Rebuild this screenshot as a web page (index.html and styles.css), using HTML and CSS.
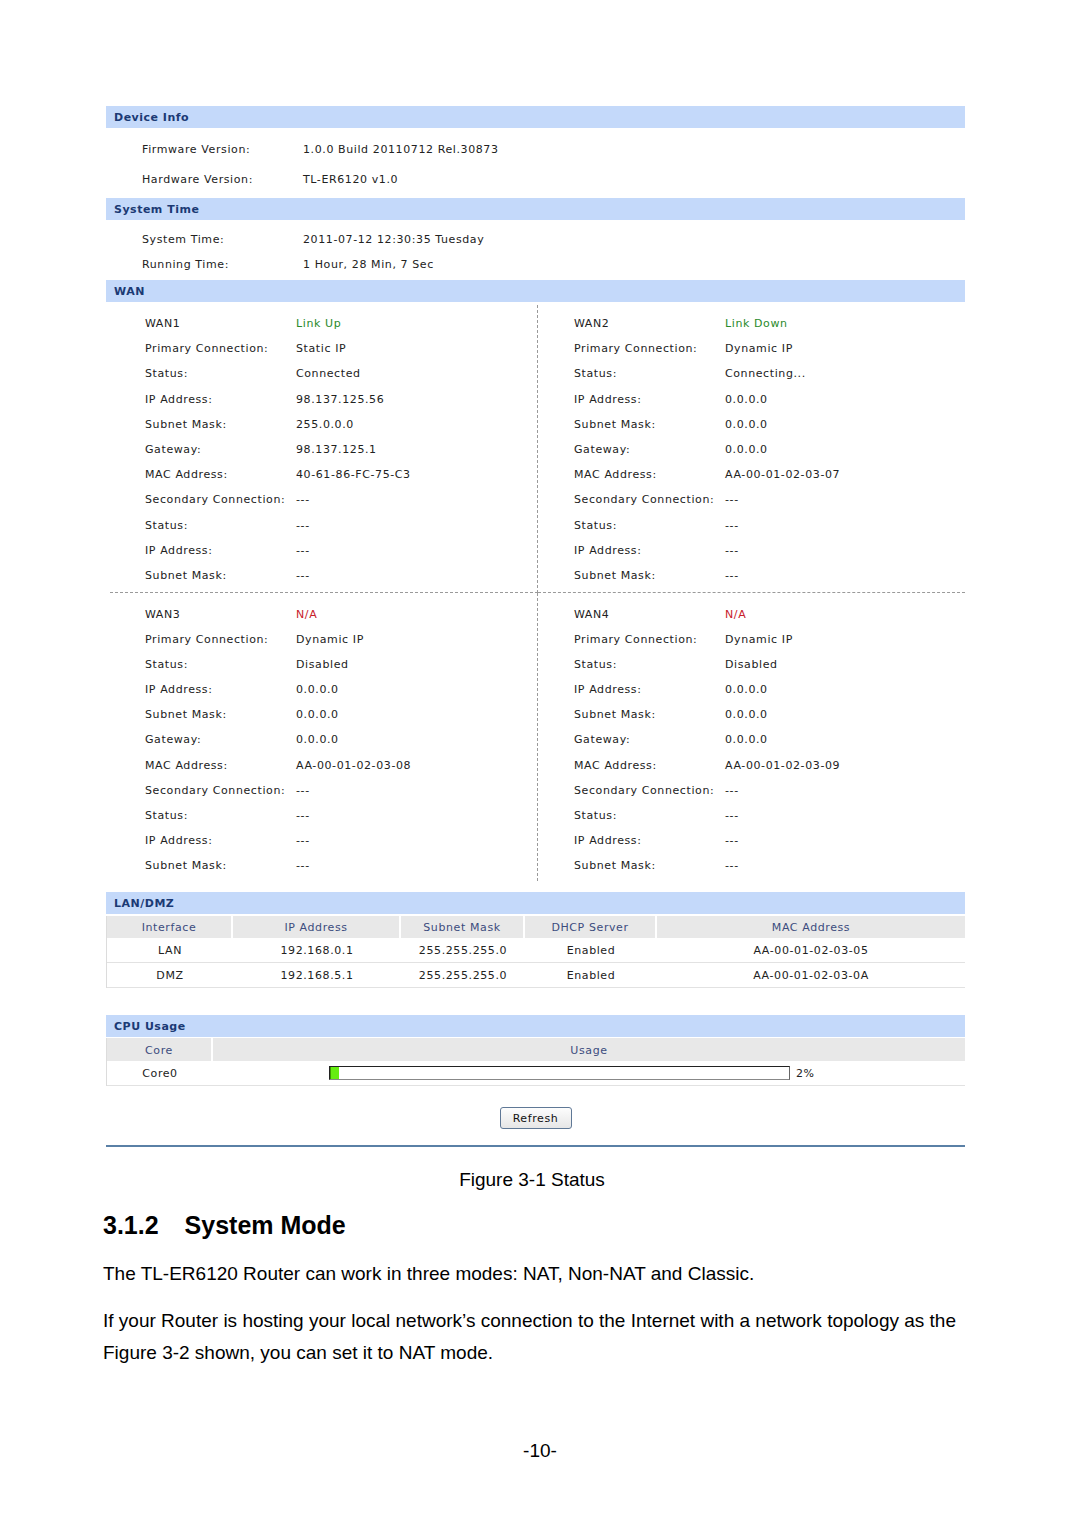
FILE: index.html
```html
<!DOCTYPE html>
<html>
<head>
<meta charset="utf-8">
<link rel="stylesheet" href="styles.css">
</head>
<body>
<div class="page">
  <div class="figure">
    <div class="bar">Device Info</div>
    <div class="kv kv-device">
      <div class="row"><span class="k">Firmware Version:</span><span class="v">1.0.0 Build 20110712 Rel.30873</span></div>
      <div class="row"><span class="k">Hardware Version:</span><span class="v">TL-ER6120 v1.0</span></div>
    </div>

    <div class="bar">System Time</div>
    <div class="kv kv-time">
      <div class="row"><span class="k">System Time:</span><span class="v">2011-07-12 12:30:35 Tuesday</span></div>
      <div class="row"><span class="k">Running Time:</span><span class="v">1 Hour, 28 Min, 7 Sec</span></div>
    </div>

    <div class="bar">WAN</div>
    <div class="wan">
      <div class="cell c-tl">
        <div class="row"><span class="k">WAN1</span><span class="v up">Link Up</span></div>
        <div class="row"><span class="k">Primary Connection:</span><span class="v">Static IP</span></div>
        <div class="row"><span class="k">Status:</span><span class="v">Connected</span></div>
        <div class="row"><span class="k">IP Address:</span><span class="v">98.137.125.56</span></div>
        <div class="row"><span class="k">Subnet Mask:</span><span class="v">255.0.0.0</span></div>
        <div class="row"><span class="k">Gateway:</span><span class="v">98.137.125.1</span></div>
        <div class="row"><span class="k">MAC Address:</span><span class="v">40-61-86-FC-75-C3</span></div>
        <div class="row"><span class="k">Secondary Connection:</span><span class="v">---</span></div>
        <div class="row"><span class="k">Status:</span><span class="v">---</span></div>
        <div class="row"><span class="k">IP Address:</span><span class="v">---</span></div>
        <div class="row"><span class="k">Subnet Mask:</span><span class="v">---</span></div>
      </div>
      <div class="cell c-tr">
        <div class="row"><span class="k">WAN2</span><span class="v up">Link Down</span></div>
        <div class="row"><span class="k">Primary Connection:</span><span class="v">Dynamic IP</span></div>
        <div class="row"><span class="k">Status:</span><span class="v">Connecting...</span></div>
        <div class="row"><span class="k">IP Address:</span><span class="v">0.0.0.0</span></div>
        <div class="row"><span class="k">Subnet Mask:</span><span class="v">0.0.0.0</span></div>
        <div class="row"><span class="k">Gateway:</span><span class="v">0.0.0.0</span></div>
        <div class="row"><span class="k">MAC Address:</span><span class="v">AA-00-01-02-03-07</span></div>
        <div class="row"><span class="k">Secondary Connection:</span><span class="v">---</span></div>
        <div class="row"><span class="k">Status:</span><span class="v">---</span></div>
        <div class="row"><span class="k">IP Address:</span><span class="v">---</span></div>
        <div class="row"><span class="k">Subnet Mask:</span><span class="v">---</span></div>
      </div>
      <div class="cell c-bl">
        <div class="row"><span class="k">WAN3</span><span class="v na">N/A</span></div>
        <div class="row"><span class="k">Primary Connection:</span><span class="v">Dynamic IP</span></div>
        <div class="row"><span class="k">Status:</span><span class="v">Disabled</span></div>
        <div class="row"><span class="k">IP Address:</span><span class="v">0.0.0.0</span></div>
        <div class="row"><span class="k">Subnet Mask:</span><span class="v">0.0.0.0</span></div>
        <div class="row"><span class="k">Gateway:</span><span class="v">0.0.0.0</span></div>
        <div class="row"><span class="k">MAC Address:</span><span class="v">AA-00-01-02-03-08</span></div>
        <div class="row"><span class="k">Secondary Connection:</span><span class="v">---</span></div>
        <div class="row"><span class="k">Status:</span><span class="v">---</span></div>
        <div class="row"><span class="k">IP Address:</span><span class="v">---</span></div>
        <div class="row"><span class="k">Subnet Mask:</span><span class="v">---</span></div>
      </div>
      <div class="cell c-br">
        <div class="row"><span class="k">WAN4</span><span class="v na">N/A</span></div>
        <div class="row"><span class="k">Primary Connection:</span><span class="v">Dynamic IP</span></div>
        <div class="row"><span class="k">Status:</span><span class="v">Disabled</span></div>
        <div class="row"><span class="k">IP Address:</span><span class="v">0.0.0.0</span></div>
        <div class="row"><span class="k">Subnet Mask:</span><span class="v">0.0.0.0</span></div>
        <div class="row"><span class="k">Gateway:</span><span class="v">0.0.0.0</span></div>
        <div class="row"><span class="k">MAC Address:</span><span class="v">AA-00-01-02-03-09</span></div>
        <div class="row"><span class="k">Secondary Connection:</span><span class="v">---</span></div>
        <div class="row"><span class="k">Status:</span><span class="v">---</span></div>
        <div class="row"><span class="k">IP Address:</span><span class="v">---</span></div>
        <div class="row"><span class="k">Subnet Mask:</span><span class="v">---</span></div>
      </div>
    </div>

    <div class="bar bar-lan">LAN/DMZ</div>
    <div class="tbl lan">
      <div class="tr th">
        <div class="td">Interface</div><div class="td">IP Address</div><div class="td">Subnet Mask</div><div class="td">DHCP Server</div><div class="td">MAC Address</div>
      </div>
      <div class="tr">
        <div class="td">LAN</div><div class="td">192.168.0.1</div><div class="td">255.255.255.0</div><div class="td">Enabled</div><div class="td">AA-00-01-02-03-05</div>
      </div>
      <div class="tr">
        <div class="td">DMZ</div><div class="td">192.168.5.1</div><div class="td">255.255.255.0</div><div class="td">Enabled</div><div class="td">AA-00-01-02-03-0A</div>
      </div>
    </div>

    <div class="bar bar-cpu">CPU Usage</div>
    <div class="tbl cpu">
      <div class="tr th">
        <div class="td">Core</div><div class="td">Usage</div>
      </div>
      <div class="tr">
        <div class="td">Core0</div>
        <div class="td usage">
          <div class="meter"><div class="fill" style="width:2%"></div></div>
          <span class="pct">2%</span>
        </div>
      </div>
    </div>

    <div class="actions"><button class="btn">Refresh</button></div>
    <div class="rule"></div>
  </div>

  <p class="caption">Figure 3-1 Status</p>
  <h2 class="heading"><span class="num">3.1.2</span><span>System Mode</span></h2>
  <p class="para p1">The TL-ER6120 Router can work in three modes: NAT, Non-NAT and Classic.</p>
  <p class="para p2">If your Router is hosting your local network’s connection to the Internet with a network topology as the Figure 3-2 shown, you can set it to NAT mode.</p>
  <p class="pagenum">-10-</p>
</div>
</body>
</html>
```

FILE: styles.css
```css
html, body {
  margin: 0;
  padding: 0;
  background: #ffffff;
}

.page {
  width: 1080px;
  height: 1527px;
  box-sizing: border-box;
  padding: 106px 117px 0 103px;
  font-family: "Liberation Sans", Arial, sans-serif;
  color: #000;
}

.figure {
  margin-left: 3px;
  width: 859px;
  font-family: "DejaVu Sans", Verdana, sans-serif;
  font-size: 11px;
  letter-spacing: 0.6px;
  color: #222;
}

.bar {
  height: 22px;
  box-sizing: border-box;
  padding-top: 1px;
  line-height: 21px;
  background: #c4d9fa;
  color: #1b3a74;
  font-weight: bold;
  font-size: 11px;
  padding-left: 8px;
  letter-spacing: 0.5px;
}

.row {
  display: flex;
  align-items: center;
  box-sizing: border-box;
  padding-top: 2px;
}

.k {
  flex: 0 0 auto;
}

.kv-device {
  padding: 5px 0;
}
.kv-device .row,
.kv-time .row {
  padding-left: 36px;
}
.kv-device .row { height: 30px; }
.kv-device .k,
.kv-time .k { width: 161px; }

.kv-time {
  padding: 6px 0 4px;
}
.kv-time .row { height: 25px; }

.wan {
  display: grid;
  grid-template-columns: 432px 427px;
  margin-top: 3px;
}
.cell .row {
  height: 25.2px;
}
.cell .k { width: 151px; }
.c-tl { margin-left: 4px; padding-left: 35px; border-right: 1px dashed #9a9a9a; }
.c-bl { padding-left: 39px; border-right: 1px dashed #9a9a9a; }
.c-tr, .c-br { padding-left: 36px; }
.c-tl, .c-tr {
  padding-top: 5px;
  padding-bottom: 5px;
  border-bottom: 1px dashed #9a9a9a;
}
.c-bl, .c-br {
  padding-top: 7.4px;
  padding-bottom: 3px;
}
.up { color: #2a8a2a; }
.na { color: #c8202a; }

.bar-lan { margin-top: 11px; }
.bar-cpu { margin-top: 27px; }

.tbl {
  margin-top: 2px;
  border-left: 1px solid #dcdcdc;
}
.tr {
  display: flex;
  border-bottom: 1px solid #e2e2e2;
}
.tr.th {
  border-bottom: none;
  background: #e8e8e8;
  height: 22px;
}
.td {
  display: flex;
  align-items: center;
  justify-content: center;
  box-sizing: border-box;
  padding-top: 2px;
}
.th .td {
  color: #3c4c7e;
  border-right: 2px solid #ffffff;
}
.th .td:last-child { border-right: none; }

.lan .tr { height: 24px; }
.lan .tr.th { height: 22px; }
.lan .td:nth-child(1) { width: 126px; }
.lan .td:nth-child(2) { width: 168px; }
.lan .td:nth-child(3) { width: 124px; }
.lan .td:nth-child(4) { width: 132px; }
.lan .td:nth-child(5) { width: 308px; }

.cpu { margin-top: 1px; }
.cpu .tr.th { height: 23px; }
.cpu .tr { height: 24px; }
.cpu .td:nth-child(1) { width: 106px; }
.cpu .td:nth-child(2) { width: 752px; }
.cpu .td.usage {
  justify-content: flex-start;
  padding-left: 116px;
  padding-top: 0;
}
.meter {
  width: 459px;
  height: 12px;
  border: 1px solid #222;
  border-right-color: #666;
  border-bottom-color: #888;
  background: #fff;
}
.fill {
  height: 100%;
  background: #66ee11;
  border-left: 1px solid #3a9a00;
  box-sizing: border-box;
}
.pct {
  margin-left: 6px;
  padding-top: 2px;
}

.actions {
  display: flex;
  justify-content: center;
  margin-top: 21px;
}
.btn {
  width: 72px;
  height: 22px;
  padding: 1px 0 0;
  font-family: "DejaVu Sans", Verdana, sans-serif;
  font-size: 11px;
  color: #111;
  letter-spacing: 0.6px;
  border: 1px solid #5f7896;
  border-radius: 3px;
  background: linear-gradient(#fdfdfd, #e6e6e6);
}

.rule {
  margin-top: 16px;
  height: 2px;
  background: #5a80a6;
}

.caption {
  margin: 22px 0 0;
  font-size: 19px;
  line-height: 22px;
  text-align: center;
  padding-right: 2px;
}

.heading {
  margin: 19px 0 0;
  font-size: 25px;
  line-height: 30px;
  font-weight: bold;
}
.heading .num {
  margin-right: 26px;
}

.para {
  margin: 0;
  font-size: 19px;
  line-height: 32px;
}
.p1 { margin-top: 18px; }
.p2 { margin-top: 15px; }

.pagenum {
  margin: 71px 0 0;
  font-size: 19px;
  line-height: 22px;
  text-align: center;
  padding-left: 14px;
}
```
